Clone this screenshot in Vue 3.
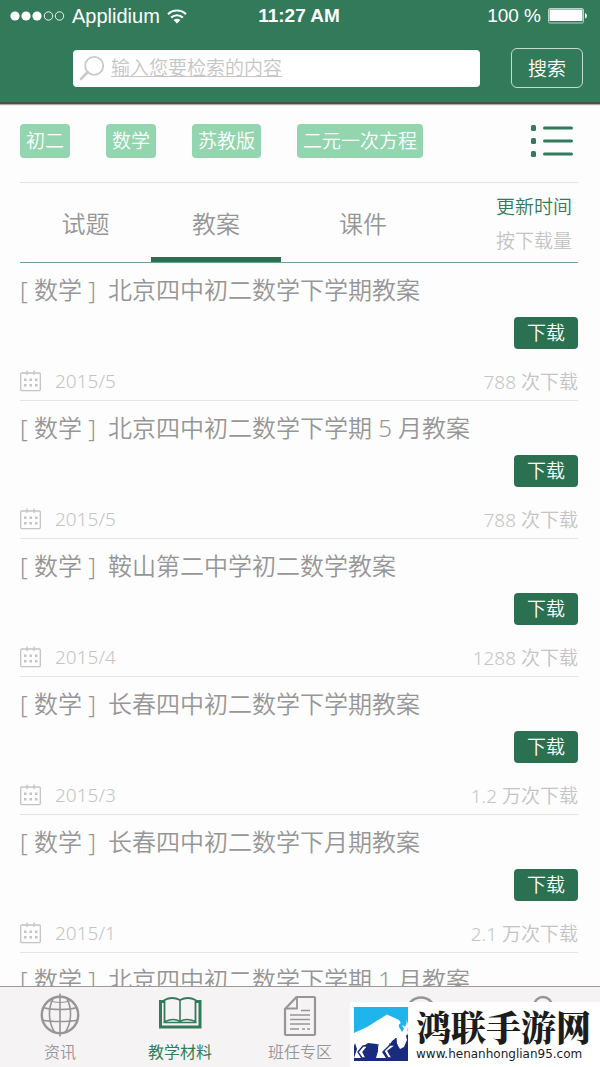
<script setup>
import { ref } from 'vue'

const query = ref('')
const filters = ['初二', '数学', '苏教版', '二元一次方程']
const tabs = ['试题', '教案', '课件']
const activeTab = ref('教案')
const items = [
  { title: '北京四中初二数学下学期教案', date: '2015/5', count: '788 次下载' },
  { title: '北京四中初二数学下学期 5 月教案', date: '2015/5', count: '788 次下载' },
  { title: '鞍山第二中学初二数学教案', date: '2015/4', count: '1288 次下载' },
  { title: '长春四中初二数学下学期教案', date: '2015/3', count: '1.2 万次下载' },
  { title: '长春四中初二数学下月期教案', date: '2015/1', count: '2.1 万次下载' },
  { title: '北京四中初二数学下学期 1 月教案', date: '2015/1', count: '2.3 万次下载' }
]
</script>

<template>
  <div class="app">
    <header class="header">
      <div class="status">
        <div class="carrier">
          <svg class="dots" width="56" height="12" viewBox="0 0 56 12">
            <g fill="#fff"><circle cx="5" cy="6" r="4.6" /><circle cx="16" cy="6" r="4.6" /><circle cx="27" cy="6" r="4.6" /></g>
            <g fill="none" stroke="#fff" stroke-width="0.9"><circle cx="38.5" cy="6" r="4.2" /><circle cx="49.5" cy="6" r="4.2" /></g>
          </svg>
          <span>Applidium</span>
          <svg class="wifi" width="20" height="15" viewBox="0 0 20 15">
            <g fill="none" stroke="#fff" stroke-width="2.2">
              <path d="M1 5.2a12.8 12.8 0 0 1 18 0" />
              <path d="M4.2 8.6a8.3 8.3 0 0 1 11.6 0" />
            </g>
            <path d="M6.6 11.1a4.9 4.9 0 0 1 6.8 0L10 14.5z" fill="#fff" />
          </svg>
        </div>
        <strong class="time">11:27 AM</strong>
        <div class="power">
          <span>100 %</span>
          <svg width="40" height="16" viewBox="0 0 40 16">
            <rect x="0.5" y="0.5" width="35" height="14.5" rx="1.5" fill="none" stroke="#b9d3c8" />
            <rect x="1.5" y="1.5" width="33" height="11.5" fill="#fff" />
            <path d="M37 5v5.5q2-.8 2-2.7T37 5z" fill="#fff" />
          </svg>
        </div>
      </div>
      <form class="search" @submit.prevent>
        <label class="field">
          <svg width="26" height="26" viewBox="0 0 26 26" fill="none" stroke="#c8c8c8">
            <circle cx="15.2" cy="10.8" r="9" stroke-width="1.8" />
            <path d="M8.6 17.2L2 24" stroke-width="2.6" stroke-linecap="round" />
          </svg>
          <input v-model="query" type="text" aria-label="搜索内容" placeholder="输入您要检索的内容" />
        </label>
        <button type="submit" class="search-button">搜索</button>
      </form>
    </header>

    <main class="main">
      <div class="filters">
        <button v-for="f in filters" :key="f" type="button" class="chip">{{ f }}</button>
        <button type="button" class="menu" aria-label="列表">
          <svg width="43" height="34" viewBox="0 0 43 34" fill="#337a5b">
            <rect x="1" y="1" width="5" height="6" rx="1.5" /><rect x="1" y="14" width="5" height="6" rx="1.5" /><rect x="1" y="27" width="5" height="6" rx="1.5" />
            <rect x="13" y="2.5" width="30" height="3" rx="1.5" /><rect x="13" y="15.5" width="30" height="3" rx="1.5" /><rect x="13" y="28.5" width="30" height="3" rx="1.5" />
          </svg>
        </button>
      </div>

      <div class="tabs">
        <button
          v-for="t in tabs"
          :key="t"
          type="button"
          class="tab"
          :class="{ active: t === activeTab }"
          @click="activeTab = t"
        >{{ t }}</button>
        <div class="sort">
          <button type="button" class="sort-on">更新时间</button>
          <button type="button">按下载量</button>
        </div>
      </div>

      <ul class="list">
        <li v-for="(item, i) in items" :key="i" class="item">
          <h2 class="title"><span class="subject">[ 数学 ]</span>{{ item.title }}</h2>
          <button type="button" class="download">下载</button>
          <div class="meta">
            <svg width="22" height="22" viewBox="0 0 22 22" fill="none" stroke="#c4c4c4">
              <rect x="0.7" y="3" width="19.6" height="17.6" rx="1" stroke-width="1.3" />
              <path d="M7 0.5v4.5M14 0.5v4.5" stroke-width="1.3" />
              <path d="M4 9.8h2.5M9.5 9.8h2.5M15 9.8h2.5M4 15.2h2.5M9.5 15.2h2.5M15 15.2h2.5" stroke-width="2.4" />
            </svg>
            <span class="date">{{ item.date }}</span>
            <span class="count">{{ item.count }}</span>
          </div>
        </li>
      </ul>
    </main>

    <nav class="nav">
      <a href="#news">
        <svg width="42" height="44" viewBox="0 0 42 44" fill="none" stroke="#969696" stroke-width="1.6">
          <circle cx="21" cy="22" r="18.2" stroke-width="2.4" />
          <path d="M21 0.5v43M4 14.5q6 2 17 2t17-2M3 27q7 1.5 18 1.5t18-1.5" />
          <path d="M14 6C9 15 9 30 16 39.5M28 6C33 15 33 30 26 39.5" />
          <path d="M10 7.5q11 4 22 0" stroke-width="1.2" />
        </svg>
        <span>资讯</span>
      </a>
      <a href="#materials" class="current">
        <svg width="44" height="44" viewBox="0 0 44 44" fill="none" stroke="#337a5b">
          <path d="M6 8.5H2.5v25.5h39.500v-25.500h-4" stroke-width="3" />
          <path d="M6.500 29.500V7Q14 3 22 7Q30 3 37.500 7v22.500" stroke-width="1.800" />
          <path d="M5.500 29.500h33M22 7v22" stroke-width="1.600" />
          <path d="M7 28.500Q16 24.500 22 28.500Q28 24.500 37.500 28.500" stroke-width="1.600" />
        </svg>
        <span>教学材料</span>
      </a>
      <a href="#teacher">
        <svg width="34" height="44" viewBox="0 0 34 44" fill="none" stroke="#969696">
          <path d="M13.500 4H31a1 1 0 0 1 1 1v36a1 1 0 0 1-1 1H3a1 1 0 0 1-1-1V16z" stroke-width="2.200" stroke-linejoin="round" />
          <path d="M14 4v11.500H2.500" stroke-width="1.800" />
          <path d="M18 17.500h9M7 22h20M7 26.500h20M7 31h20M7 36h9M19 36h3M24 36h3" stroke-width="1.700" />
        </svg>
        <span>班任专区</span>
      </a>
      <a href="#find" aria-label="发现">
        <svg width="44" height="44" viewBox="0 0 44 44" fill="none" stroke="#969696" stroke-width="2.400">
          <circle cx="23" cy="19" r="14.500" />
        </svg>
      </a>
      <a href="#me" aria-label="我的">
        <svg width="44" height="44" viewBox="0 0 44 44" fill="none" stroke="#969696" stroke-width="2.400">
          <circle cx="25" cy="13" r="9" />
          <path d="M6 42q2-17 19-17t18 17" />
        </svg>
      </a>
    </nav>

    <aside class="brand">
      <svg width="54" height="54" viewBox="0 0 54 54">
        <rect width="54" height="54" fill="#1fb5ec" />
        <path d="M0 27h54v27H0z" fill="#182b7c" />
        <path d="M48 20h6v8h-6z" fill="#1fb5ec" />
        <path d="M0 26L13 20L33 7.500L45 13L48 18L53 21L54 26L52 29L53 33L50 40L46 42L43 37L42 31L38 34L35 39L28 45L32 51H22L24 44L23 37L14 36L11 38L5 44L7 51H0L3 42L1 36L0 39z" fill="#fff" />
        <path d="M48 11L47 16Q44 17 45 20L48 25L50 22L48 18Q51 15 48 11z" fill="#1fb5ec" />
        <path d="M50 20Q54 17 52 12Q54 15 54 20L53 24L50 23z" fill="#fff" />
        <path d="M24 37L23 44M42 31V37H35" stroke="#182b7c" stroke-width="1.200" fill="none" />
        <path d="M14 39H9L4 45L8 51H12L9 45zM42 38H36L30 44L34 51H38L34 44z" fill="#fff" stroke="#182b7c" stroke-width="1.400" />
      </svg>
      <div class="brand-text">
        <strong>鸿联手游网</strong>
        <span>www.henanhonglian95.com</span>
      </div>
    </aside>
  </div>
</template>

<style>
body {
  margin: 0;
  overflow: hidden;
}
</style>

<style scoped>
.app {
  position: relative;
  display: flex;
  flex-direction: column;
  height: 100vh;
  background: #fdfdfd;
  color: #969696;
  font-family: "Noto Sans", "Noto Sans CJK SC", sans-serif;
  font-weight: 350;
  font-size: 19px;
}
.app * {
  box-sizing: border-box;
}
svg {
  display: block;
  flex: none;
}
button {
  margin: 0;
  padding: 0;
  border: 0;
  background: none;
  color: inherit;
  font: inherit;
  white-space: nowrap;
  cursor: pointer;
}
.header {
  flex: none;
  background: #337a5b;
  border-bottom: 2px solid #4a4f4c;
  box-shadow: 0 1px 1px #aaa;
  color: #fff;
}
.status {
  display: grid;
  grid-template-columns: 1fr auto 1fr;
  align-items: center;
  height: 32px;
  padding: 0 12px 0 10px;
  font-family: "Liberation Sans", sans-serif;
  font-weight: 400;
}
.carrier,
.power {
  display: flex;
  align-items: center;
}
.carrier {
  font-size: 20px;
}
.dots {
  margin-right: 6px;
}
.wifi {
  margin-left: 7px;
}
.power {
  justify-content: flex-end;
  gap: 7px;
}
.search {
  display: flex;
  justify-content: flex-end;
  align-items: center;
  gap: 31px;
  height: 70px;
  padding: 2px 17px 0 73px;
}
.field {
  display: flex;
  flex: 1;
  align-items: center;
  height: 37px;
  padding-left: 6px;
  border-radius: 4px;
  background: #fff;
}
.field input {
  flex: 1;
  min-width: 0;
  height: 36px;
  padding: 0 6px;
  border: 0;
  outline: 0;
  background: none;
  color: #666;
  font: inherit;
}
.field input::placeholder {
  color: #c6c6c6;
  opacity: 1;
  text-decoration: underline;
}
.search-button {
  width: 72px;
  height: 40px;
  border: 1px solid #c4dbd0;
  border-radius: 6px;
}
.main {
  display: flex;
  flex: 1;
  flex-direction: column;
  min-height: 0;
  padding: 0 22px 0 20px;
  overflow: hidden;
}
.filters {
  display: flex;
  flex: none;
  align-items: center;
  gap: 36px;
  height: 79px;
  padding-bottom: 4px;
  border-bottom: 1px solid #e4e4e4;
}
.chip {
  height: 34px;
  padding: 0 6px;
  border-radius: 4px;
  background: #93d5ae;
  color: #fff;
  line-height: 34px;
}
.menu {
  margin: 0 5px 0 auto;
}
.tabs {
  display: flex;
  flex: none;
  height: 80px;
  border-bottom: 1px solid #6ba48b;
}
.tab {
  width: 130px;
  height: 79px;
  padding-top: 4px;
  border-bottom: 5px solid transparent;
  font-size: 24px;
}
.tab.active {
  border-bottom-color: #2b7151;
}
.tab:nth-child(1) {
  width: 131px;
}
.tab:nth-child(3) {
  width: 164px;
}
.sort {
  display: flex;
  flex-direction: column;
  justify-content: center;
  gap: 6px;
  margin: 2px 6px 0 auto;
  color: #c4c4c4;
  line-height: 28px;
}
.sort-on {
  color: #337a5b;
}
.list {
  margin: 0;
  padding: 0;
  list-style: none;
}
.item {
  display: flex;
  flex-direction: column;
  height: 138px;
  padding-top: 11px;
  border-bottom: 1px solid #e4e4e4;
}
.title {
  margin: 0;
  font-size: 24px;
  font-weight: 350;
  line-height: 32px;
  white-space: nowrap;
}
.subject {
  margin-right: 12px;
}
.download {
  align-self: flex-end;
  width: 64px;
  height: 32px;
  margin-top: 11px;
  border-radius: 4px;
  background: #2b7151;
  color: #fff;
  line-height: 32px;
}
.meta {
  display: flex;
  align-items: center;
  height: 28px;
  margin-top: 18px;
  color: #c4c4c4;
}
.date {
  margin-left: 13px;
}
.count {
  margin-left: auto;
}
.nav {
  display: grid;
  flex: none;
  grid-template-columns: repeat(5, 1fr);
  height: 81px;
  border-top: 1px solid #9a9a9a;
  background: #f5f3f4;
}
.nav a {
  display: flex;
  flex-direction: column;
  align-items: center;
  padding-top: 6px;
  color: #969696;
  font-size: 16px;
  line-height: 30px;
  text-decoration: none;
}
.nav .current {
  color: #337a5b;
  font-weight: 400;
}
.brand {
  position: absolute;
  right: 0;
  bottom: 0;
  display: flex;
  gap: 8px;
  width: 250px;
  height: 65px;
  padding: 5px 0 0 4px;
  background: #fff;
  color: #1c1c1c;
}
.brand-text {
  display: flex;
  flex-direction: column;
}
.brand-text strong {
  font-family: "Noto Serif CJK SC", "Noto Sans CJK SC", serif;
  font-size: 35px;
  font-weight: 900;
  line-height: 38px;
}
.brand-text span {
  font-family: "DejaVu Sans", sans-serif;
  font-size: 12px;
  font-weight: 400;
  line-height: 18px;
}
</style>
